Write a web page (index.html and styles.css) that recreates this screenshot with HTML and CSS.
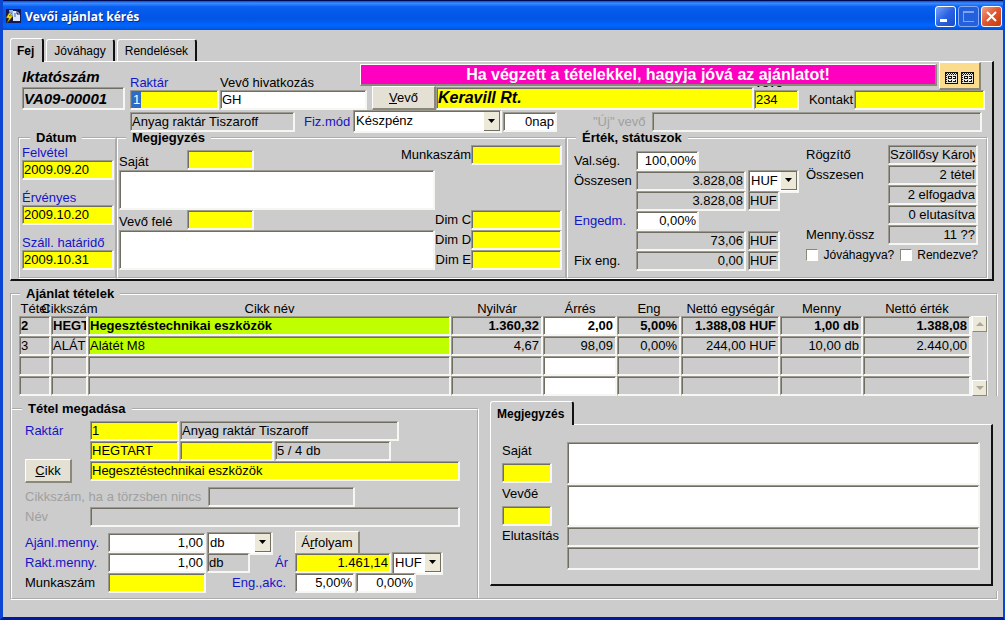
FILE: index.html
```html
<!DOCTYPE html>
<html lang="hu">
<head>
    <meta charset="UTF-8">
    <meta name="viewport" content="width=device-width, initial-scale=1.0">
    <title>Vevői ajánlat kérés</title>
    <link rel="stylesheet" href="styles.css">
</head>
<body>
    <div class="window">
        <header class="titlebar">
            <svg class="app-icon" width="17" height="17" viewBox="0 0 17 17">
                <rect x="1" y="1" width="15" height="14" fill="#17184f"/>
                <path d="M4 2h4v7H5z" fill="#8fb4f0"/>
                <path d="M8 3h4l3 3v7H8z" fill="#dbe8ff"/>
                <path d="M12 3v3h3" fill="none" stroke="#17184f"/>
                <path d="M9 6h2M9 8h2" stroke="#3c62c4"/>
                <path d="M4 5L1 10h3l-2 5 6-7H4l3-3z" fill="#ffe600" stroke="#5b4a00" stroke-width=".5"/>
            </svg>
            <h1>Vevői ajánlat kérés</h1>
            <button class="win-btn" aria-label="Kis méret">
                <svg width="19" height="19" viewBox="0 0 19 19"><path d="M4 12h7v3H4z" fill="#fff"/></svg>
            </button>
            <button class="win-btn dim" aria-label="Teljes méret" disabled>
                <svg width="19" height="19" viewBox="0 0 19 19" shape-rendering="crispEdges"><path d="M4 4h11v11H4zM5 6h10v8H5z" fill="#7ea4f4" fill-rule="evenodd"/></svg>
            </button>
            <button class="win-btn close" aria-label="Bezárás">
                <svg width="19" height="19" viewBox="0 0 19 19"><path d="M5 5l9 9M14 5l-9 9" stroke="#fff" stroke-width="2"/></svg>
            </button>
        </header>

        <main class="content">
            <nav class="tabs">
                <button class="tab active">Fej</button>
                <button class="tab">Jóváhagy</button>
                <button class="tab">Rendelések</button>
            </nav>

            <section class="panel head-panel">
                <p class="banner">Ha végzett a tételekkel, hagyja jóvá az ajánlatot!</p>
                <button class="grid-btn" aria-label="Táblázatok">
                    <svg width="29" height="12" viewBox="0 0 29 12" shape-rendering="crispEdges">
                        <path d="M0 0h13v12H0zM16 0h13v12H16z" fill="#111"/>
                        <path d="M1 1h11v10H1zM17 1h11v10H17z" fill="#e8e4d8"/>
                        <path d="M1 1.500h11M17 1.500h11M2 2.500h10M18 2.500h10" stroke="#111" stroke-dasharray="1 1"/>
                        <path d="M1.500 3v8M17.500 3v8" stroke="#111" stroke-dasharray="1 1"/>
                        <path d="M3 4h4v3H3zM8 4h3v3H8zM3 8h4v2H3zM8 8h3v2H8zM19 4h4v3h-4zM24 4h3v3h-3zM19 8h4v2h-4zM24 8h3v2h-3z" fill="#111"/>
                        <path d="M4 5.500h2M8 5.500h2M4 8.500h2M8 8.500h2M20 5.500h2M24 5.500h2M20 8.500h2M24 8.500h2" stroke="#fff"/>
                    </svg>
                </button>

                <div class="row row-ids">
                    <div class="stack doc-no">
                        <label for="iktato">Iktatószám</label>
                        <input id="iktato" class="field grey" value="VA09-00001" readonly>
                    </div>
                    <div class="stack w-code">
                        <label for="raktar" class="blue">Raktár</label>
                        <div class="field yellow"><mark>1</mark><input id="raktar" class="bare"></div>
                    </div>
                    <div class="stack w-ref">
                        <label for="hiv">Vevő hivatkozás</label>
                        <input id="hiv" class="field" value="GH">
                    </div>
                    <button class="btn btn-vevo"><u>V</u>evő</button>
                    <input class="field yellow customer" value="Keravill Rt." aria-label="Vevő neve">
                    <div class="stack w-no">
                        <label for="vevo">Vevő</label>
                        <input id="vevo" class="field yellow" value="234">
                    </div>
                    <label for="kontakt" class="lbl-kontakt">Kontakt</label>
                    <input id="kontakt" class="field yellow w-kontakt">
                </div>

                <div class="row row-pay">
                    <input class="field grey w-store" value="Anyag raktár Tiszaroff" aria-label="Raktár neve" readonly>
                    <label for="fizmod" class="blue lbl-fiz">Fiz.mód</label>
                    <select id="fizmod" class="w-fiz"><option>Készpénz</option></select>
                    <input class="field num w-nap" value="0nap" aria-label="Fizetési napok">
                    <label for="ujvevo" class="off lbl-uj">"Új" vevő</label>
                    <input id="ujvevo" class="field grey grow" disabled>
                </div>

                <div class="groups">
                    <fieldset class="dates">
                        <legend>Dátum</legend>
                        <div class="stack">
                            <label for="felvetel" class="blue">Felvétel</label>
                            <input id="felvetel" class="field yellow" value="2009.09.20">
                        </div>
                        <div class="stack">
                            <label for="ervenyes" class="blue">Érvényes</label>
                            <input id="ervenyes" class="field yellow" value="2009.10.20">
                        </div>
                        <div class="stack">
                            <label for="hatarido" class="blue">Száll. határidő</label>
                            <input id="hatarido" class="field yellow" value="2009.10.31">
                        </div>
                    </fieldset>

                    <fieldset class="notes">
                        <legend>Megjegyzés</legend>
                        <div class="notes-grid">
                            <label for="sajat" class="low">Saját</label>
                            <input id="sajat" class="field yellow low">
                            <label for="munkaszam" class="right wide">Munkaszám</label>
                            <input id="munkaszam" class="field yellow">
                            <textarea class="field memo" aria-label="Saját megjegyzés"></textarea>
                            <label for="vevofele" class="first">Vevő felé</label>
                            <input id="vevofele" class="field yellow">
                            <label for="dimc" class="right dim-label">Dim C</label>
                            <input id="dimc" class="field yellow">
                            <textarea class="field memo tall" aria-label="Vevő felé megjegyzés"></textarea>
                            <label for="dimd" class="right dim-label">Dim D</label>
                            <input id="dimd" class="field yellow">
                            <label for="dime" class="right dim-label">Dim E</label>
                            <input id="dime" class="field yellow">
                        </div>
                    </fieldset>

                    <fieldset class="totals">
                        <legend>Érték, státuszok</legend>
                        <div class="totals-body">
                            <div class="sums">
                                <label for="valseg">Val.ség.</label>
                                <input id="valseg" class="field num short" value="100,00%">
                                <label for="ossz">Összesen</label>
                                <input id="ossz" class="field grey num" value="3.828,08" readonly>
                                <select aria-label="Pénznem"><option>HUF</option></select>
                                <input class="field grey num second" value="3.828,08" aria-label="Összesen HUF" readonly>
                                <output class="field grey cur">HUF</output>
                                <label for="engedm" class="blue">Engedm.</label>
                                <input id="engedm" class="field num short" value="0,00%">
                                <input class="field grey num second" value="73,06" aria-label="Engedmény összege" readonly>
                                <output class="field grey cur">HUF</output>
                                <label for="fixeng">Fix eng.</label>
                                <input id="fixeng" class="field grey num" value="0,00" readonly>
                                <output class="field grey cur">HUF</output>
                            </div>
                            <div class="status">
                                <label for="rogzito">Rögzítő</label>
                                <input id="rogzito" class="field grey" value="Szöllősy Károly" readonly>
                                <label for="tetel">Összesen</label>
                                <input id="tetel" class="field grey num" value="2 tétel" readonly>
                                <input class="field grey num second" value="2 elfogadva" aria-label="Elfogadva" readonly>
                                <input class="field grey num second" value="0 elutasítva" aria-label="Elutasítva" readonly>
                                <label for="menny">Menny.össz</label>
                                <input id="menny" class="field grey num" value="11 ??" readonly>
                                <div class="checks">
                                    <input type="checkbox" id="jovahagyva"><label for="jovahagyva">Jóváhagyva?</label>
                                    <input type="checkbox" id="rendezve"><label for="rendezve">Rendezve?</label>
                                </div>
                            </div>
                        </div>
                    </fieldset>
                </div>
            </section>

            <fieldset class="items">
                <legend>Ajánlat tételek</legend>
                <div class="items-table">
                    <table>
                        <colgroup>
                            <col class="c-no"><col class="c-code"><col><col class="c-price"><col class="c-margin">
                            <col class="c-disc"><col class="c-net"><col class="c-qty"><col class="c-total">
                        </colgroup>
                        <thead>
                            <tr>
                                <th><span>Tétel</span></th>
                                <th><span>Cikkszám</span></th>
                                <th><span>Cikk név</span></th>
                                <th><span>Nyilvár</span></th>
                                <th><span>Árrés</span></th>
                                <th><span>Eng</span></th>
                                <th><span>Nettó egységár</span></th>
                                <th><span>Menny</span></th>
                                <th><span>Nettó érték</span></th>
                            </tr>
                        </thead>
                        <tbody>
                            <tr class="current">
                                <td>2</td><td>HEGT</td><td class="lime">Hegesztéstechnikai eszközök</td>
                                <td class="num">1.360,32</td><td class="num white">2,00</td><td class="num">5,00%</td>
                                <td class="num">1.388,08 HUF</td><td class="num">1,00 db</td><td class="num">1.388,08</td>
                            </tr>
                            <tr>
                                <td>3</td><td>ALÁT</td><td class="lime">Alátét M8</td>
                                <td class="num">4,67</td><td class="num">98,09</td><td class="num">0,00%</td>
                                <td class="num">244,00 HUF</td><td class="num">10,00 db</td><td class="num">2.440,00</td>
                            </tr>
                            <tr>
                                <td></td><td></td><td></td><td></td><td class="white"></td><td></td><td></td><td></td><td></td>
                            </tr>
                            <tr>
                                <td></td><td></td><td></td><td></td><td class="white"></td><td></td><td></td><td></td><td></td>
                            </tr>
                        </tbody>
                    </table>
                    <div class="scrollbar">
                        <button aria-label="Fel"><svg width="8" height="4" viewBox="0 0 8 4"><path d="M0 4l4-4 4 4z" fill="#aca899"/></svg></button>
                        <button aria-label="Le"><svg width="8" height="4" viewBox="0 0 8 4"><path d="M0 0l4 4 4-4z" fill="#aca899"/></svg></button>
                    </div>
                </div>

                <div class="lower">
                    <fieldset class="entry">
                        <legend>Tétel megadása</legend>
                        <div class="row">
                            <label for="t-raktar" class="blue l-short">Raktár</label>
                            <input id="t-raktar" class="field yellow w-code" value="1">
                            <input class="field grey w-name" value="Anyag raktár Tiszaroff" aria-label="Raktár neve" readonly>
                        </div>
                        <div class="row">
                            <span class="l-short"></span>
                            <input class="field yellow w-code" value="HEGTART" aria-label="Cikkszám">
                            <input class="field yellow w-variant" aria-label="Változat">
                            <input class="field grey w-stock" value="5 / 4 db" aria-label="Készlet" readonly>
                        </div>
                        <div class="row">
                            <span class="l-short"><button class="btn btn-cikk"><u>C</u>ikk</button></span>
                            <input class="field yellow grow" value="Hegesztéstechnikai eszközök" aria-label="Cikk név">
                        </div>
                        <div class="row spaced">
                            <label for="t-egyeb" class="off l-long">Cikkszám, ha a törzsben nincs</label>
                            <input id="t-egyeb" class="field grey w-own" disabled>
                        </div>
                        <div class="row">
                            <label for="t-nev" class="off l-short">Név</label>
                            <input id="t-nev" class="field grey grow" disabled>
                        </div>
                        <div class="row spaced">
                            <label for="t-ajanl" class="blue l-mid">Ajánl.menny.</label>
                            <input id="t-ajanl" class="field num w-qty" value="1,00">
                            <select class="w-unit" aria-label="Egység"><option>db</option></select>
                            <button class="btn btn-rate">Á<u>r</u>folyam</button>
                        </div>
                        <div class="row">
                            <label for="t-rakt" class="blue l-mid">Rakt.menny.</label>
                            <input id="t-rakt" class="field num w-qty" value="1,00">
                            <output class="field grey w-db">db</output>
                            <label for="t-ar" class="blue l-ar">Ár</label>
                            <input id="t-ar" class="field yellow num w-price" value="1.461,14">
                            <select class="w-cur" aria-label="Pénznem"><option>HUF</option></select>
                        </div>
                        <div class="row">
                            <label for="t-munka" class="l-mid">Munkaszám</label>
                            <input id="t-munka" class="field yellow w-qty">
                            <label for="t-eng" class="blue l-eng">Eng.,akc.</label>
                            <input id="t-eng" class="field num w-pct" value="5,00%">
                            <input class="field num w-pct" value="0,00%" aria-label="Akció">
                        </div>
                    </fieldset>

                    <aside class="side">
                        <nav class="tabs"><button class="tab active">Megjegyzés</button></nav>
                        <section class="panel side-panel">
                            <div class="stack"><label for="s-sajat">Saját</label><input id="s-sajat" class="field yellow"></div>
                            <textarea class="field" aria-label="Saját megjegyzés"></textarea>
                            <div class="stack"><label for="s-vevo">Vevőé</label><input id="s-vevo" class="field yellow"></div>
                            <textarea class="field" aria-label="Vevőé megjegyzés"></textarea>
                            <label for="s-elut">Elutasítás</label>
                            <input id="s-elut" class="field grey" readonly>
                            <input class="field grey second" aria-label="Elutasítás részletei" readonly>
                        </section>
                    </aside>
                </div>
            </fieldset>
        </main>
    </div>
</body>
</html>
```
FILE: styles.css
```css
* {
    margin: 0;
    padding: 0;
    box-sizing: border-box;
}

body {
    background: #ccc;
    color: #000;
    font: 13px/14px "Liberation Sans", Arial, sans-serif;
}

input, select, textarea, button {
    font: inherit;
    color: inherit;
    border-radius: 0;
    min-width: 0;
}

.window {
    display: flex;
    flex-direction: column;
    min-height: 100vh;
    border: solid #0a46d2;
    border-width: 0 2px 3px 3px;
    border-bottom-color: #0019a0;
}

/* title bar */
.titlebar {
    display: flex;
    align-items: center;
    gap: 2px;
    height: 30px;
    padding: 2px 1px 0 2px;
    border-top: 1px solid #000a50;
    background: linear-gradient(#0a50d8, #3a8cff 8%, #0a5ef0 20%, #0055e5 60%, #0066ff 85%, #0050d8);
}

.titlebar h1 {
    flex: 1;
    padding-left: 1px;
    color: #fff;
    font: bold 12px/20px "Open Sans", sans-serif;
    text-shadow: 1px 1px #0a2a80;
}

.win-btn {
    width: 21px;
    height: 21px;
    border: 1px solid #fff;
    border-radius: 3px;
    background: linear-gradient(135deg, #7aa2f8, #2a62e4 50%, #1a4cc8);
}

.win-btn svg {
    display: block;
}

.win-btn.dim {
    border-color: #86a9f2;
    background: #2560dc;
}

.win-btn.close {
    background: linear-gradient(135deg, #f0a088, #e0532c 50%, #c83c10);
}

.content {
    flex: 1;
    padding: 8px 5px 15px 7px;
}

/* tabs and raised panels */
.tabs {
    display: flex;
    align-items: flex-end;
    gap: 2px;
}

.tab {
    height: 22px;
    padding: 0 7px;
    border: solid #fff;
    border-width: 1px 2px 0 1px;
    border-right-color: #111;
    border-radius: 3px 3px 0 0;
    background: #ccc;
    font-size: 12px;
}

.tab.active {
    position: relative;
    z-index: 1;
    height: 24px;
    margin-bottom: -1px;
    padding: 0 8px 0 6px;
    font-weight: bold;
}

.panel {
    margin-right: 4px;
    border: 1px solid #fff;
    border-right: 2px solid #111;
    border-bottom: 2px solid #111;
}

.head-panel {
    position: relative;
}

/* fields */
.field {
    height: 20px;
    padding: 0 1px;
    border: solid #9c9a90;
    border-width: 1px 2px 2px 1px;
    border-right-color: #f6f6f2;
    border-bottom-color: #f6f6f2;
    box-shadow: inset 1px 1px #706e62;
    background: #fff;
    outline: none;
    resize: none;
    overflow: hidden;
}

.yellow {
    background: #ff0;
}

.grey {
    background: #ccc;
}

.lime {
    background: #bfff00;
}

.num {
    text-align: right;
}

.blue {
    color: #1414c8;
}

.off {
    color: #a0a0a0;
}

.right {
    text-align: right;
}

.grow {
    flex: 1;
}

output.field {
    line-height: 18px;
}

label {
    white-space: nowrap;
}

select {
    appearance: none;
    height: 23px;
    padding: 0 17px 0 2px;
    border: solid #9c9a90;
    border-width: 1px 2px 2px 1px;
    border-right-color: #f6f6f2;
    border-bottom-color: #f6f6f2;
    box-shadow: inset 1px 1px #706e62;
    background: #fff url("data:image/svg+xml,%3Csvg xmlns='http://www.w3.org/2000/svg' width='16' height='19'%3E%3Cpath d='M0 0h16v19H0z' fill='%23716f64'/%3E%3Cpath d='M0 0h15v18H0z' fill='%23ece9d8'/%3E%3Cpath d='M4 7h7l-3.5 4z'/%3E%3C/svg%3E") right center no-repeat;
}

.stack {
    display: flex;
    flex-direction: column;
}

.stack .field {
    width: 100%;
}

.btn {
    height: 24px;
    border: solid #fff;
    border-width: 1px 2px 2px 1px;
    border-right-color: #8a8878;
    border-bottom-color: #8a8878;
    background: #e4e0d4;
}

.bare {
    flex: 1;
    border: 0;
    background: none;
    outline: none;
}

mark {
    padding: 0 1px;
    background: #316ac5;
    color: #fff;
    line-height: 17px;
}

/* document header */
.banner {
    position: absolute;
    z-index: 1;
    top: 2px;
    left: 349px;
    right: 55px;
    border: 1px solid #fff;
    border-right: 2px solid #8a8878;
    border-bottom: 2px solid #8a8878;
    background: #ff00c0;
    color: #fff;
    font-size: 16px;
    font-weight: bold;
    line-height: 19px;
    text-align: center;
}

.grid-btn {
    position: absolute;
    z-index: 1;
    top: 0;
    right: 11px;
    width: 42px;
    height: 28px;
    padding-top: 7px;
    border: solid #fff;
    border-width: 1px 2px 2px 1px;
    border-right-color: #8a8878;
    border-bottom-color: #8a8878;
    background: #fbdc8c;
}

.row {
    display: flex;
    align-items: center;
    gap: 1px;
    height: 20px;
}

.row-ids {
    align-items: flex-end;
    gap: 0;
    height: 48px;
    padding: 0 7px 0 11px;
}

.doc-no {
    width: 103px;
    margin-right: 5px;
    font-size: 15px;
    font-style: italic;
    font-weight: bold;
    line-height: 20px;
}

.doc-no .field {
    height: 23px;
}

.w-code {
    width: 89px;
}

.w-code .field {
    display: flex;
}

.w-ref {
    width: 147px;
    margin: 0 5px 0 1px;
}

.btn-vevo {
    width: 64px;
}

.customer {
    flex: 1;
    height: 23px;
    font-size: 16px;
    font-style: italic;
    font-weight: bold;
}

.w-no {
    width: 45px;
}

.lbl-kontakt {
    margin: 0 1px 3px 10px;
}

.w-kontakt {
    width: 131px;
}

.row-pay {
    height: 23px;
    padding: 0 10px 0 119px;
}

.w-store {
    width: 165px;
}

.lbl-fiz {
    width: 48px;
    margin-left: 8px;
}

.w-fiz {
    width: 149px;
}

.w-nap {
    width: 54px;
}

.lbl-uj {
    width: 58px;
    margin-left: 35px;
}

/* group boxes */
fieldset {
    min-width: 0;
    border: 2px groove #fff;
}

legend {
    padding: 0 6px;
    font-weight: bold;
}

.groups {
    display: flex;
    margin: -2px 4px 0 7px;
}

.dates {
    display: flex;
    flex-direction: column;
    gap: 10px;
    width: 99px;
    padding: 0 1px 0 2px;
}

.dates legend {
    margin-left: 8px;
}

.dates label {
    line-height: 15px;
}

.notes {
    flex: 1;
    margin-left: -1px;
    padding: 0 3px 0 1px;
}

.notes legend {
    margin-left: 7px;
}

.notes-grid {
    display: grid;
    grid-template-columns: 68px 67px 1fr 36px 91px;
    grid-template-rows: 25px 40px 20px 20px 20px;
    align-items: center;
}

.notes-grid > * {
    align-self: start;
    padding-top: 2px;
}

.notes-grid .low {
    align-self: end;
}

.notes-grid label {
    line-height: 16px;
}

.notes-grid .wide {
    grid-column: 3 / 5;
}

.notes-grid .memo {
    grid-column: 1 / 4;
    height: 40px;
}

.notes-grid .tall {
    grid-row: 4 / 6;
}

.notes-grid .first {
    grid-column: 1;
    padding-top: 4px;
}

.notes-grid .dim-label {
    grid-column: 4;
}

.totals {
    width: 422px;
    margin-left: -1px;
    padding: 0 8px 6px 6px;
}

.totals legend {
    margin-left: 2px;
}

.totals-body {
    display: flex;
    justify-content: space-between;
}

.sums, .status {
    display: grid;
    grid-auto-rows: 20px;
    align-items: center;
}

.sums {
    grid-template-columns: 62px 112px 51px;
    padding-top: 6px;
}

.sums .num {
    width: 110px;
}

.sums .short {
    grid-column: 2 / 4;
    width: 63px;
}

.sums .second, .status .second {
    grid-column: 2;
}

.sums .cur {
    width: 32px;
}

.status {
    grid-template-columns: 82px 90px;
}

.checks {
    grid-column: 1 / 3;
    display: flex;
    align-items: center;
    justify-content: space-between;
    font-size: 12px;
}

.checks input {
    appearance: none;
    width: 12px;
    height: 12px;
    border: 1px solid #8a8878;
    border-right-color: #fff;
    border-bottom-color: #fff;
    background: #fff;
}

/* item list */
.items {
    margin-top: 6px;
}

.items > legend {
    margin-left: 8px;
}

.items-table {
    display: flex;
    padding: 0 8px 0 7px;
}

table {
    flex: 1;
    width: 100%;
    table-layout: fixed;
    border-spacing: 0;
}

.c-no { width: 32px; }
.c-code { width: 37px; }
.c-price { width: 92px; }
.c-margin { width: 74px; }
.c-disc { width: 64px; }
.c-net { width: 99px; }
.c-qty { width: 83px; }
.c-total { width: 108px; }

th {
    height: 15px;
    font-weight: normal;
}

th span {
    display: flex;
    justify-content: center;
    white-space: nowrap;
}

td {
    height: 20px;
    padding: 0 2px 0 1px;
    border: solid #9c9a90;
    border-width: 1px 2px 2px 1px;
    border-right-color: #f6f6f2;
    border-bottom-color: #f6f6f2;
    box-shadow: inset 1px 1px #706e62;
    white-space: nowrap;
    overflow: hidden;
}

td.white {
    background: #fff;
}

.current {
    font-weight: bold;
}

.scrollbar {
    display: flex;
    flex-direction: column;
    justify-content: space-between;
    width: 17px;
    margin-top: 15px;
    border: solid #f6f6f2;
    border-width: 0 1px;
}

.scrollbar button {
    display: flex;
    align-items: center;
    justify-content: center;
    height: 16px;
    border: 1px solid #fff;
    border-right-color: #8a8878;
    border-bottom-color: #8a8878;
    background: #ece9d8;
}

/* item entry */
.lower {
    display: flex;
    gap: 11px;
}

.entry {
    width: 467px;
    margin-top: 6px;
    padding: 5px 17px 5px 13px;
    border-left: 0;
    border-bottom: 0;
}

.entry legend {
    margin-left: -3px;
}

.entry .spaced {
    margin-top: 6px;
}

.l-short {
    width: 64px;
}

.l-mid {
    width: 82px;
}

.l-long {
    width: 182px;
}

.l-ar {
    width: 19px;
    margin-left: 24px;
}

.l-eng {
    width: 62px;
    margin-left: 25px;
}

.w-name {
    width: 219px;
}

.w-variant {
    width: 94px;
}

.w-stock {
    width: 116px;
}

.w-own {
    width: 147px;
}

.w-qty {
    width: 98px;
}

.w-unit {
    width: 66px;
}

.w-db {
    width: 43px;
}

.w-price {
    width: 96px;
}

.w-cur {
    width: 51px;
}

.w-pct {
    width: 60px;
}

.btn-cikk {
    width: 47px;
}

.btn-rate {
    width: 65px;
    margin-left: 21px;
}

.side {
    flex: 1;
    align-self: flex-start;
    margin-right: -2px;
    padding: 5px 0;
    background: #ccc;
}

.side-panel {
    display: grid;
    grid-template-columns: 65px 1fr;
    grid-template-rows: 43px 42px 20px 23px;
    padding: 17px 11px 14px 11px;
}

.side-panel textarea {
    height: 100%;
}

.side-panel .stack {
    gap: 5px;
    width: 50px;
    padding-top: 2px;
}

.side-panel label {
    padding-top: 2px;
}

.side-panel .second {
    grid-column: 2;
    height: 23px;
}

.side-panel .stack label {
    padding-top: 0;
}

.side .panel {
    margin-right: 5px;
}
```
